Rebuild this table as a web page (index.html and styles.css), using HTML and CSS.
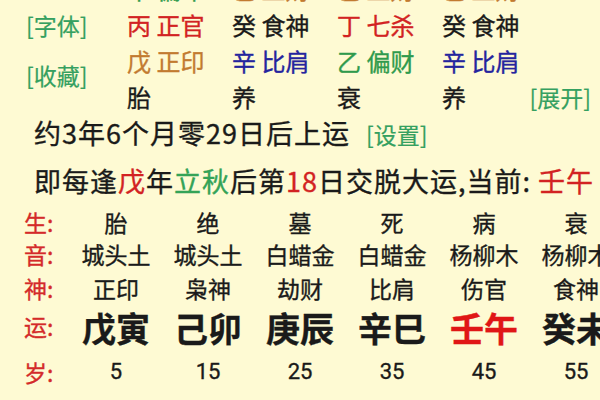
FILE: index.html
```html
<!DOCTYPE html>
<html lang="zh">
<head>
<meta charset="utf-8">
<link rel="stylesheet" href="styles.css">
</head>
<body>
<div class="page">
  <div class="pillars">
    <span class="cell c1 r0"><span class="green">甲 偏印</span></span>
    <span class="cell c2 r0"><span class="orange">己 正财</span></span>
    <span class="cell c3 r0"><span class="orange">己 正财</span></span>
    <span class="cell c4 r0"><span class="orange">己 正财</span></span>

    <span class="link side r1">[字体]</span>
    <span class="cell c1 r1 red">丙 正官</span>
    <span class="cell c2 r1">癸 食神</span>
    <span class="cell c3 r1 red">丁 七杀</span>
    <span class="cell c4 r1">癸 食神</span>

    <span class="link side r23">[收藏]</span>
    <span class="cell c1 r2 orange">戊 正印</span>
    <span class="cell c2 r2 blue">辛 比肩</span>
    <span class="cell c3 r2 green">乙 偏财</span>
    <span class="cell c4 r2 blue">辛 比肩</span>

    <span class="cell c1 r3">胎</span>
    <span class="cell c2 r3">养</span>
    <span class="cell c3 r3">衰</span>
    <span class="cell c4 r3">养</span>
    <span class="link expand r3">[展开]</span>
  </div>

  <p class="line line4">约3年6个月零29日后上运<span class="link setting">[设置]</span></p>
  <p class="line line5">即每逢<span class="red">戊</span>年<span class="lgreen">立秋</span>后第<span class="red">18</span>日交脱大运,当前: <span class="red">壬午</span></p>

  <div class="luck">
    <span class="lbl">生:</span>
    <span class="v">胎</span><span class="v">绝</span><span class="v">墓</span><span class="v">死</span><span class="v">病</span><span class="v">衰</span>

    <span class="lbl">音:</span>
    <span class="v">城头土</span><span class="v">城头土</span><span class="v">白蜡金</span><span class="v">白蜡金</span><span class="v">杨柳木</span><span class="v">杨柳木</span>

    <span class="lbl">神:</span>
    <span class="v">正印</span><span class="v">枭神</span><span class="v">劫财</span><span class="v">比肩</span><span class="v">伤官</span><span class="v">食神</span>

    <span class="lbl">运:</span>
    <span class="v big">戊寅</span><span class="v big">己卯</span><span class="v big">庚辰</span><span class="v big">辛巳</span><span class="v big cur">壬午</span><span class="v big">癸未</span>

    <span class="lbl">岁:</span>
    <span class="v num">5</span><span class="v num">15</span><span class="v num">25</span><span class="v num">35</span><span class="v num">45</span><span class="v num">55</span>

    <span class="lbl">年:</span>
    <span class="v num">1991</span><span class="v num">2001</span><span class="v num">2011</span><span class="v num">2021</span><span class="v num">2031</span><span class="v num">2041</span>
  </div>
</div>
</body>
</html>
```

FILE: styles.css
```css
html, body {
  margin: 0;
  padding: 0;
  background: #fefad3;
}
body {
  width: 600px;
  height: 400px;
  overflow: hidden;
  font-family: "Noto Sans CJK SC", "Noto Sans", sans-serif;
  color: #1a1a1a;
  -webkit-text-stroke: 0.35px currentColor;
}
.page {
  display: flex;
  flex-direction: column;
}
.red { color: #d22222; }
.orange { color: #c27a30; }
.blue { color: #24249e; }
.green { color: #2f9a4c; }
.lgreen { color: #34a357; }
.link { color: #35a060; -webkit-text-stroke: 0.2px currentColor; }

.pillars {
  margin-top: -29px;
  display: grid;
  grid-template-columns: 127px 105px 105px 105px 105px 53px;
  grid-template-rows: 36px 36px 36px 36px;
  font-size: 24px;
  line-height: 36px;
}
.cell { white-space: nowrap; }
.c1 { grid-column: 2; }
.c2 { grid-column: 3; }
.c3 { grid-column: 4; }
.c4 { grid-column: 5; }
.r0 { grid-row: 1; }
.r1 { grid-row: 2; }
.r2 { grid-row: 3; }
.r3 { grid-row: 4; }
.r23 { grid-row: 3 / 5; }
.side {
  grid-column: 1;
  padding-left: 26px;
  font-size: 23px;
  align-self: center;
}
.r23.side { padding-bottom: 8px; }
.expand {
  grid-column: 5 / 7;
  justify-self: end;
  padding-right: 9px;
  font-size: 23px;
}

.line {
  margin: 0;
  padding-left: 34px;
  font-size: 27px;
  letter-spacing: 1px;
  line-height: 36px;
  white-space: nowrap;
}
.line5 { margin-top: 11px; }
.setting {
  margin-left: 16px;
  font-size: 23px;
  letter-spacing: 0;
}

.luck {
  margin-top: 7px;
  display: grid;
  grid-template-columns: 70px repeat(6, 92px);
  grid-template-rows: 32px 32px 36px 40px 52px 40px;
  align-items: center;
  font-size: 23px;
  line-height: 30px;
}
.lbl {
  color: #d42a2a;
  padding-left: 24px;
  font-size: 23px;
}
.v {
  text-align: center;
  white-space: nowrap;
}
.big {
  font-size: 34px;
  font-weight: bold;
  line-height: 40px;
  padding-top: 3px;
}
.cur { color: #e01616; }
.num {
  font-family: Roboto, "Noto Sans", sans-serif;
  font-size: 22px;
}
```
